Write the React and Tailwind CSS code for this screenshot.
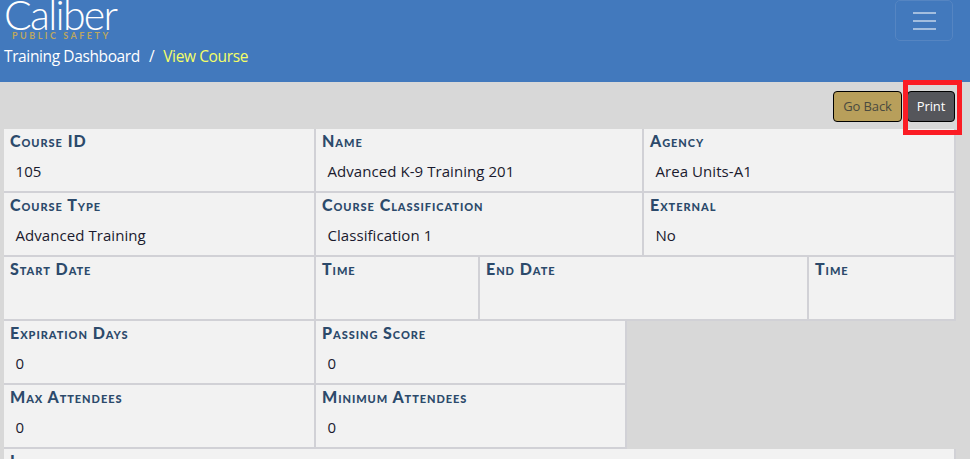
const body = { fontFamily: '"Open Sans", "Noto Sans", sans-serif' };

const Cell = ({ label, value, width }) => {
  return (
    <div className={`h-[64px] shrink-0 border-r-2 border-b-2 border-[#d1d1d6] bg-[#f2f2f2] ${width}`}>
      <div className="pl-[6px] pt-[2px] font-['Lato'] text-[16px] leading-[20px] font-black tracking-[0.95px] text-[#2c4a6b] [font-variant:small-caps]">
        {label}
      </div>
      <div className="pt-[9px] pl-[11.5px] text-[15px] leading-[22px] tracking-[0.06px] text-[#1a1a2e]">
        {value}
      </div>
    </div>
  );
};

const App = () => {
  return (
    <div className="relative h-[459px] w-[970px] overflow-hidden bg-[#d8d8d8]" style={body}>
      <header className="flex h-[82px] justify-between bg-[#4279bd] pr-[17px] pl-[4px]">
        <div>
          <div className="h-[42px] w-[130px]">
            <div className="h-[29px] font-['Lato'] text-[41px] leading-[29px] font-light tracking-[-1.7px] text-white">
              Caliber
            </div>
            <div className="pt-[2px] pl-[8px] font-['Lato'] text-[9px] leading-[9px] font-bold tracking-[2.5px] whitespace-nowrap text-[#bda75f]">
              PUBLIC SAFETY
            </div>
          </div>
          <div className="flex pt-[3px] text-[15.5px] leading-[22px] tracking-[-0.38px]">
            <span className="text-white">Training Dashboard</span>
            <span className="px-[9px] text-white">/</span>
            <span className="text-[#f5ff66]">View Course</span>
          </div>
        </div>
        <button className="flex h-[41px] w-[58px] flex-col items-center justify-center gap-[6px] rounded-[5px] border border-[#5585c2]">
          <span className="h-[2px] w-[23px] bg-[#a3bedf]"></span>
          <span className="h-[2px] w-[23px] bg-[#a3bedf]"></span>
          <span className="h-[2px] w-[23px] bg-[#a3bedf]"></span>
        </button>
      </header>

      <div className="flex h-[47px] items-start justify-end gap-[5px] pt-[9px] pr-[15px]">
        <button className="h-[31px] w-[69px] rounded-[4px] border border-black bg-[#b89f5b] text-[13px] tracking-[-0.1px] text-[#4a4a40]">
          Go Back
        </button>
        <button className="h-[31px] w-[48px] rounded-[4px] border border-black bg-[#55565b] text-[13px] tracking-[-0.1px] text-white">
          Print
        </button>
      </div>

      <div className="ml-[4px] w-[952px]">
        <div className="flex">
          <Cell label="Course ID" value="105" width="w-[312px]" />
          <Cell label="Name" value="Advanced K-9 Training 201" width="w-[328px]" />
          <Cell label="Agency" value="Area Units-A1" width="w-[312px]" />
        </div>
        <div className="flex">
          <Cell label="Course Type" value="Advanced Training" width="w-[312px]" />
          <Cell label="Course Classification" value="Classification 1" width="w-[328px]" />
          <Cell label="External" value="No" width="w-[312px]" />
        </div>
        <div className="flex">
          <Cell label="Start Date" width="w-[312px]" />
          <Cell label="Time" width="w-[164px]" />
          <Cell label="End Date" width="w-[329px]" />
          <Cell label="Time" width="w-[147px]" />
        </div>
        <div className="flex">
          <Cell label="Expiration Days" value="0" width="w-[312px]" />
          <Cell label="Passing Score" value="0" width="w-[311px]" />
        </div>
        <div className="flex">
          <Cell label="Max Attendees" value="0" width="w-[312px]" />
          <Cell label="Minimum Attendees" value="0" width="w-[311px]" />
        </div>
        <div className="flex">
          <Cell label="Location" width="w-[952px]" />
        </div>
      </div>

      {/* annotation box around Print */}
      <div className="absolute top-[80px] left-[903px] h-[55px] w-[59px] border-[5px] border-[#fb1c24]"></div>
    </div>
  );
};

export default App;
